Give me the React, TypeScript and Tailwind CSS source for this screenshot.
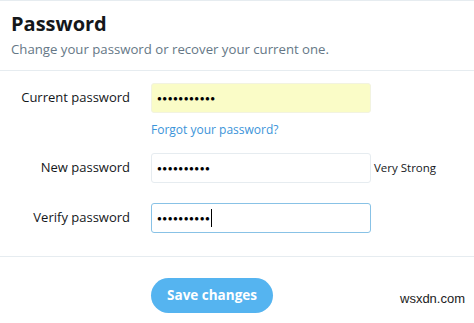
const font = { fontFamily: '"Segoe UI", "Open Sans", "Noto Sans", sans-serif' }

function Row({ label, dots, extra, focused, filled }: { label: string; dots: number; extra?: string; focused?: boolean; filled?: boolean }) {
  return (
    <div className="flex items-center">
      <label className="w-[130px] pl-[10px] text-right text-[13px] text-[#14171a] pr-[21px] box-content shrink-0 -ml-[10px]">{label}</label>
      <div
        className={`w-[220px] h-[30px] rounded-[3px] border flex items-center pl-[5px] ${
          filled ? 'bg-[#fafcc7] border-[#f2f3e0]' : focused ? 'bg-white border-[#88c2e6]' : 'bg-white border-[#e6ecf0]'
        }`}
      >
        <span className="text-[8px] tracking-[0.5px] text-black leading-none">{'●'.repeat(dots)}</span>
        {focused && <span className="w-px h-[18px] bg-black ml-[1px]" />}
      </div>
      {extra && <span className="ml-[3px] text-[11.5px] text-[#14171a]">{extra}</span>}
    </div>
  )
}

export default function App() {
  return (
    <div className="w-[474px] h-[323px] bg-white border-t border-[#e6ecf0] relative overflow-hidden" style={font}>
      {/* Header */}
      <div className="px-[11px] pt-[10px] pb-[12px] border-b border-[#e6ecf0]">
        <h1 className="text-[20px] font-bold text-[#14171a] leading-[26px]">Password</h1>
        <p className="text-[13.2px] text-[#657786] leading-[18px] mt-[3px]">Change your password or recover your current one.</p>
      </div>

      {/* Form */}
      <div className="pt-[12px] pb-[23px] border-b border-[#e6ecf0]">
        <Row label="Current password" dots={11} filled />
        <div className="pl-[151px] mt-[7px] text-[12px] text-[#3b94d9] leading-[20px]">Forgot your password?</div>
        <div className="mt-[13px]">
          <Row label="New password" dots={10} extra="Very Strong" />
        </div>
        <div className="mt-[20px]">
          <Row label="Verify password" dots={10} focused />
        </div>
      </div>

      <div className="pl-[151px] pt-[21px]">
        <button className="w-[122px] h-[35px] rounded-full bg-[#55b4f0] text-white text-[13.5px] font-bold">Save changes</button>
      </div>

      <span className="absolute left-[400px] top-[288px] text-[13px] text-[#222]" style={{ fontFamily: '"Liberation Sans", sans-serif' }}>wsxdn.com</span>
    </div>
  )
}
